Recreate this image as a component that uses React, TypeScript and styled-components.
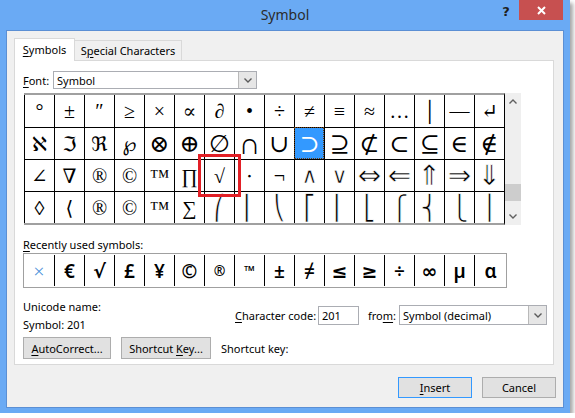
import styled, { createGlobalStyle } from "styled-components";

const GlobalStyle = createGlobalStyle`
  html, body {
    margin: 0;
    padding: 0;
    background: #fff;
  }
  body {
    font-family: "Segoe UI", "Noto Sans", sans-serif;
    font-size: 11px;
    color: #000;
    white-space: nowrap;
  }
  u {
    text-decoration: underline;
    text-underline-offset: 2px;
  }
`;

const Window = styled.div`
  width: 570px;
  height: 413px;
  box-sizing: border-box;
  background: #6aaaf4;
  display: flex;
  flex-direction: column;
  box-shadow: 3px 3px 4px rgba(0, 0, 0, 0.35);
`;

const TitleBar = styled.div`
  height: 31px;
  flex: none;
  display: grid;
  grid-template-columns: 1fr auto 1fr;
  align-items: start;
`;

const Title = styled.div`
  grid-column: 2;
  font-size: 14px;
  line-height: 30px;
  color: #2b2b2b;
`;

const TitleControls = styled.div`
  grid-column: 3;
  justify-self: end;
  display: flex;
  margin-right: 7px;
`;

const HelpButton = styled.div`
  width: 26px;
  height: 22px;
  line-height: 24px;
  text-align: center;
  font-family: "DejaVu Sans", sans-serif;
  font-weight: bold;
  font-size: 13px;
  color: #1e1e1e;
`;

const CloseButton = styled.div`
  width: 44px;
  height: 20px;
  background: #c75050;
  display: flex;
  align-items: center;
  justify-content: center;
`;

const Client = styled.div`
  flex: 1;
  margin: 0 7px 6px 7px;
  background: #f0f0f0;
  outline: 1px solid #5b8fd4;
  padding: 7px 7px 9px 7px;
  display: flex;
  flex-direction: column;
`;

const TabStrip = styled.div`
  display: flex;
  align-items: flex-end;
  height: 23px;
  margin-bottom: -1px;
  position: relative;
  z-index: 1;
`;

const Tab = styled.div<{ $active?: boolean; $width: number }>`
  box-sizing: border-box;
  width: ${(p) => p.$width}px;
  height: ${(p) => (p.$active ? 23 : 21)}px;
  margin-left: ${(p) => (p.$active ? 0 : -1)}px;
  background: ${(p) => (p.$active ? "#fff" : "#f0f0f0")};
  border: 1px solid #d9d9d9;
  border-bottom: ${(p) => (p.$active ? "none" : "1px solid #d9d9d9")};
  text-align: center;
  line-height: ${(p) => (p.$active ? 22 : 19)}px;
`;

const Panel = styled.div`
  width: 540px;
  box-sizing: border-box;
  background: #fff;
  border: 1px solid #d9d9d9;
  padding: 10px 0 5px 8px;
  display: flex;
  flex-direction: column;
`;

const FontRow = styled.div`
  display: flex;
  align-items: center;
  height: 18px;
`;

const FontLabel = styled.span`
  width: 30px;
`;

const Dropdown = styled.div<{ $width: number; $height: number }>`
  box-sizing: border-box;
  width: ${(p) => p.$width}px;
  height: ${(p) => p.$height}px;
  border: 1px solid #abadb3;
  background: #fff;
  display: flex;
`;

const DropValue = styled.div`
  flex: 1;
  padding-left: 3px;
  display: flex;
  align-items: center;
`;

const DropButton = styled.div`
  width: 17px;
  background: #e6e6e6;
  border-left: 1px solid #b9b9b9;
  display: flex;
  align-items: center;
  justify-content: center;
`;

const GridArea = styled.div`
  display: flex;
  margin-top: 4px;
  margin-left: 1px;
`;

const SymbolGrid = styled.div`
  display: grid;
  grid-template-columns: repeat(16, 30px);
  grid-auto-rows: 32px;
  border-top: 2px solid #a0a0a0;
  border-bottom: 2px solid #a0a0a0;
  border-right: 1px solid #000;
`;

const Cell = styled.div<{
  $selected?: boolean;
  $marked?: boolean;
  $size: number;
  $thin?: boolean;
}>`
  box-sizing: border-box;
  border-left: 1px solid #000;
  border-top: 1px solid #000;
  display: flex;
  align-items: center;
  justify-content: center;
  overflow: hidden;
  font-family: ${(p) =>
    p.$thin
      ? `"DejaVu Sans", sans-serif`
      : `"Liberation Serif", "DejaVu Serif", "DejaVu Sans", serif`};
  font-size: ${(p) => p.$size}px;
  line-height: 1;
  -webkit-text-stroke: ${(p) => (p.$thin ? "0.6px #fff" : "0")};
  background: ${(p) => (p.$selected ? "#3399ff" : "transparent")};
  color: ${(p) => (p.$selected ? "#fff" : "#000")};
  outline: ${(p) => (p.$selected ? "1px dotted #6b3d10" : "none")};
  outline-offset: -1px;
  position: ${(p) => (p.$marked ? "relative" : "static")};

  &:nth-child(-n + 16) {
    border-top: none;
  }

  &::after {
    content: "";
    display: ${(p) => (p.$marked ? "block" : "none")};
    position: absolute;
    left: -7px;
    right: -7px;
    top: -6px;
    bottom: -6px;
    border: 3px solid #e21f26;
    z-index: 2;
    pointer-events: none;
  }
`;

const MarkedCell = styled(Cell)`
  overflow: visible;
`;

const Scrollbar = styled.div`
  width: 16px;
  background: #efefef;
  display: flex;
  flex-direction: column;
`;

const ScrollArrow = styled.div`
  height: 17px;
  display: flex;
  align-items: center;
  justify-content: center;
`;

const ScrollTrack = styled.div`
  flex: 1;
`;

const ScrollThumb = styled.div`
  height: 17px;
  margin-top: 74px;
  background: #cdcdcd;
`;

const RecentLabel = styled.div`
  margin-top: 12px;
  line-height: 15px;
`;

const RecentBox = styled.div`
  margin-top: 1px;
  width: 484px;
  height: 35px;
  box-sizing: border-box;
  border: 1px solid #a0a0a0;
  display: grid;
  grid-template-columns: 31px repeat(14, 30px) 1fr;
`;

const RecentCell = styled.div<{ $light?: boolean; $small?: boolean }>`
  margin: 1px 0;
  border-right: 1px solid #000;
  display: flex;
  align-items: center;
  justify-content: center;
  font-family: "Noto Sans", "DejaVu Sans", sans-serif;
  font-size: ${(p) => (p.$small ? 14 : 19)}px;
  font-weight: ${(p) => (p.$light ? 300 : 600)};
  color: ${(p) => (p.$light ? "#4a90d9" : "#000")};

  &:last-child {
    border-right: none;
  }
`;

const InfoArea = styled.div`
  margin-top: 9px;
  display: grid;
  grid-template-columns: 212px 1fr;
  grid-template-rows: 18px 18px;
  align-items: center;
`;

const CodeRow = styled.div`
  grid-column: 2;
  grid-row: 1 / span 2;
  display: flex;
  align-items: center;
`;

const FieldLabel = styled.span<{ $width: number }>`
  width: ${(p) => p.$width}px;
`;

const CodeInput = styled.div`
  box-sizing: border-box;
  width: 41px;
  height: 19px;
  margin-right: 9px;
  border: 1px solid #abadb3;
  padding-left: 3px;
  line-height: 17px;
`;

const ButtonRow = styled.div`
  margin-top: 4px;
  display: flex;
  align-items: center;
  gap: 10px;
`;

const Button = styled.div<{ $width: number; $height: number; $default?: boolean }>`
  box-sizing: border-box;
  width: ${(p) => p.$width}px;
  height: ${(p) => p.$height}px;
  background: #e1e1e1;
  border: 1px solid ${(p) => (p.$default ? "#3399ff" : "#adadad")};
  display: flex;
  align-items: center;
  justify-content: center;
`;

const Footer = styled.div`
  margin-top: 12px;
  display: flex;
  justify-content: flex-end;
  gap: 10px;
`;

const Chevron = ({ up, color = "#5a5a5a" }: { up?: boolean; color?: string }) => (
  <svg width="8" height="5" viewBox="0 0 8 5">
    <polyline
      points={up ? "0.5,4.5 4,1 7.5,4.5" : "0.5,0.5 4,4 7.5,0.5"}
      fill="none"
      stroke={color}
      strokeWidth="1.4"
    />
  </svg>
);

const rows = [
  ["°", "±", "″", "≥", "×", "∝", "∂", "•", "÷", "≠", "≡", "≈", "…", "│", "―", "↵"],
  ["ℵ", "ℑ", "ℜ", "℘", "⊗", "⊕", "∅", "∩", "∪", "⊃", "⊇", "⊄", "⊂", "⊆", "∈", "∉"],
  ["∠", "∇", "®", "©", "™", "∏", "√", "⋅", "¬", "∧", "∨", "⇔", "⇐", "⇑", "⇒", "⇓"],
  ["◊", "⟨", "®", "©", "™", "∑", "⎛", "⎜", "⎝", "⎡", "⎢", "⎣", "⎧", "⎨", "⎩", "⎪"],
];

// glyph size per cell, the Symbol font draws some shapes larger than the text face
const cellSize = (r: number, c: number) => {
  if (r === 1 && c === 7) return 30;
  if (r === 1 && c >= 4) return 24;
  if (r === 2 && c >= 11) return 28;
  if (r === 2 && c >= 9) return 22;
  if (r === 3 && c >= 6) return 24;
  return 20;
};

const isThin = (r: number, c: number) => (r === 3 && c >= 6) || (r === 2 && c >= 9);

const recent = ["×", "€", "√", "£", "¥", "©", "®", "™", "±", "≠", "≤", "≥", "÷", "∞", "µ", "α"];

function App() {
  return (
    <>
      <GlobalStyle />
      <Window>
        <TitleBar>
          <Title>Symbol</Title>
          <TitleControls>
            <HelpButton>?</HelpButton>
            <CloseButton>
              <svg width="9" height="9" viewBox="0 0 9 9">
                <path d="M1 1 L8 8 M8 1 L1 8" stroke="#fff" strokeWidth="2" />
              </svg>
            </CloseButton>
          </TitleControls>
        </TitleBar>
        <Client>
          <TabStrip>
            <Tab $active $width={61}>
              <u>S</u>ymbols
            </Tab>
            <Tab $width={108}>
              S<u>p</u>ecial Characters
            </Tab>
          </TabStrip>
          <Panel>
            <FontRow>
              <FontLabel>
                <u>F</u>ont:
              </FontLabel>
              <Dropdown $width={204} $height={18}>
                <DropValue>Symbol</DropValue>
                <DropButton>
                  <Chevron />
                </DropButton>
              </Dropdown>
            </FontRow>
            <GridArea>
              <SymbolGrid>
                {rows.map((row, r) =>
                  row.map((ch, c) => {
                    const CellKind = r === 2 && c === 6 ? MarkedCell : Cell;
                    return (
                      <CellKind
                        key={`${r}-${c}`}
                        $selected={r === 1 && c === 9}
                        $marked={r === 2 && c === 6}
                        $size={cellSize(r, c)}
                        $thin={isThin(r, c)}
                      >
                        {ch}
                      </CellKind>
                    );
                  })
                )}
              </SymbolGrid>
              <Scrollbar>
                <ScrollArrow>
                  <Chevron up color="#606060" />
                </ScrollArrow>
                <ScrollTrack>
                  <ScrollThumb />
                </ScrollTrack>
                <ScrollArrow>
                  <Chevron color="#606060" />
                </ScrollArrow>
              </Scrollbar>
            </GridArea>
            <RecentLabel>
              <u>R</u>ecently used symbols:
            </RecentLabel>
            <RecentBox>
              {recent.map((ch, i) => (
                <RecentCell key={i} $light={i === 0} $small={i === 6 || i === 7}>
                  {ch}
                </RecentCell>
              ))}
            </RecentBox>
            <InfoArea>
              <span>Unicode name:</span>
              <CodeRow>
                <FieldLabel $width={83}>
                  <u>C</u>haracter code:
                </FieldLabel>
                <CodeInput>201</CodeInput>
                <FieldLabel $width={31}>
                  fro<u>m</u>:
                </FieldLabel>
                <Dropdown $width={148} $height={20}>
                  <DropValue>Symbol (decimal)</DropValue>
                  <DropButton>
                    <Chevron />
                  </DropButton>
                </Dropdown>
              </CodeRow>
              <span>Symbol: 201</span>
            </InfoArea>
            <ButtonRow>
              <Button $width={88} $height={22}>
                <span>
                  <u>A</u>utoCorrect...
                </span>
              </Button>
              <Button $width={90} $height={22}>
                <span>
                  Shortcut <u>K</u>ey...
                </span>
              </Button>
              <span>Shortcut key:</span>
            </ButtonRow>
          </Panel>
          <Footer>
            <Button $width={74} $height={21} $default>
              <span>
                <u>I</u>nsert
              </span>
            </Button>
            <Button $width={74} $height={21}>
              Cancel
            </Button>
          </Footer>
        </Client>
      </Window>
    </>
  );
}

export default App;
